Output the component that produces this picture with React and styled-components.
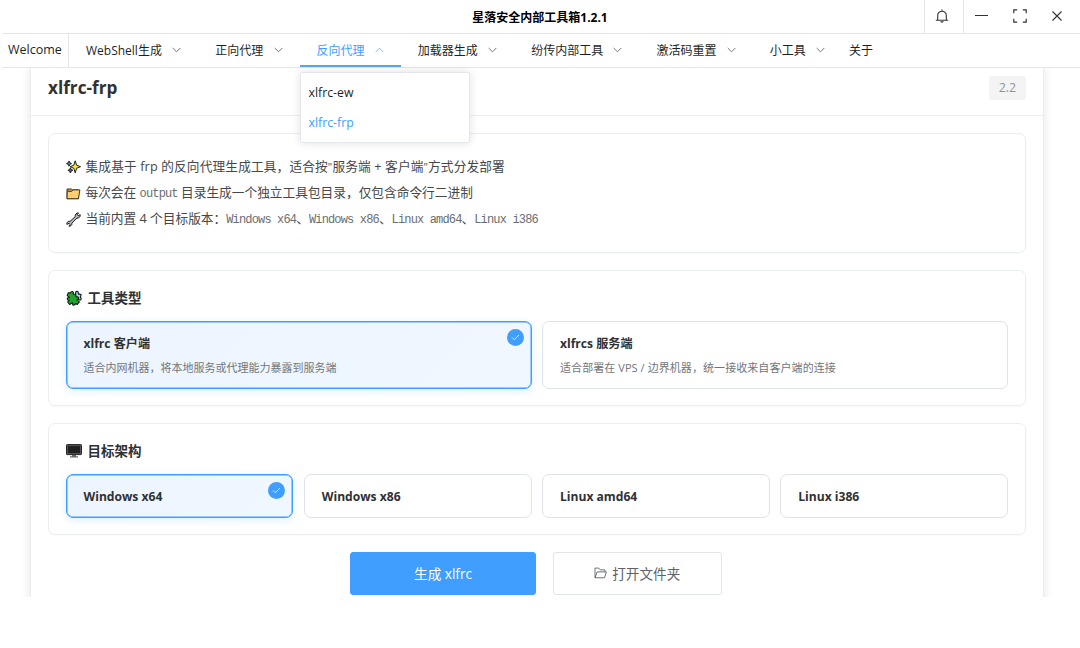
import React from "react";
import styled, { createGlobalStyle, css } from "styled-components";

const GlobalStyle = createGlobalStyle`
  * {
    box-sizing: border-box;
  }
  body {
    margin: 0;
    background: #fff;
    font-family: "Open Sans", "Noto Sans CJK SC", sans-serif;
    font-size: 12px;
    color: #1f1f1f;
  }
`;

const menus = [
  { label: "WebShell生成" },
  { label: "正向代理" },
  { label: "反向代理", open: true },
  { label: "加载器生成" },
  { label: "纷传内部工具" },
  { label: "激活码重置" },
  { label: "小工具" },
];

const types = [
  { name: "xlfrc 客户端", desc: "适合内网机器，将本地服务或代理能力暴露到服务端", active: true },
  { name: "xlfrcs 服务端", desc: "适合部署在 VPS / 边界机器，统一接收来自客户端的连接", spacing: 0.07 },
];

const archs = [
  { name: "Windows x64", active: true },
  { name: "Windows x86" },
  { name: "Linux amd64" },
  { name: "Linux i386" },
];

function Chevron({ up }) {
  return (
    <svg width="9" height="6" viewBox="0 0 9 6" fill="none" stroke={up ? "#6db3fb" : "#666"} strokeWidth="0.9">
      <path d={up ? "M.7 5 4.5 1.2 8.3 5" : "M.7 1 4.5 4.8 8.3 1"} />
    </svg>
  );
}

function BellIcon() {
  return (
    <svg width="14" height="14" viewBox="0 0 14 14" fill="none" stroke="#333" strokeWidth="1.1">
      <path d="M2.7 11.2V6.5a4.3 4.3 0 0 1 8.6 0v4.7M.8 11.3h12.4M7 2.2V.6M5.7 12.1a1.35 1.35 0 0 0 2.6 0" />
    </svg>
  );
}

function ExpandIcon() {
  return (
    <svg width="14" height="14" viewBox="0 0 14 14" fill="none" stroke="#333" strokeWidth="1.2">
      <path d="M.8 4.2V.8h3.4M9.8.8h3.4v3.4M13.2 9.8v3.4H9.8M4.2 13.2H.8V9.8" />
    </svg>
  );
}

function CloseIcon() {
  return (
    <svg width="10" height="10" viewBox="0 0 10 10" stroke="#333" strokeWidth="1.1">
      <path d="m.5.5 9 9m0-9-9 9" />
    </svg>
  );
}

function CheckIcon() {
  return (
    <svg width="9" height="7" viewBox="0 0 9 7" fill="none" stroke="#e4f1ff" strokeWidth="0.9">
      <path d="m1 3.4 2.3 2.3L8 1" />
    </svg>
  );
}

function SparkleIcon() {
  return (
    <svg width="15" height="14" viewBox="0 0 15 14" stroke="#1d1d1d" strokeWidth="1" strokeLinejoin="round">
      <path d="m3 1 .8 1.8 1.7.8-1.7.8L3 6.2l-.8-1.8-1.7-.8 1.7-.8z" fill="#2696cf" />
      <path d="m4.4 7.8.8 1.7 1.7.8-1.7.8-.8 1.9-.8-1.9-1.7-.8 1.7-.8z" fill="#62558b" />
      <path d="m9.2.8 1.4 4.4 3.9 1.5-3.9 1.6-1.4 4.5-1.4-4.5-3.6-1.6 3.6-1.5z" fill="#ffe02b" />
    </svg>
  );
}

function FolderEmoji() {
  return (
    <svg width="15" height="13" viewBox="0 0 15 13" stroke="#33291b" strokeWidth="0.9" strokeLinejoin="round">
      <path d="M1 11.7V2h4.4l1.2.9h6v8.8z" fill="#d9973a" />
      <path d="m1 11.7.3-7.4h4.5l1.3-1.4h6.8l-1.5 8.8z" fill="#ffcf72" />
    </svg>
  );
}

function WrenchIcon() {
  return (
    <svg width="15" height="15" viewBox="0 0 15 15" stroke="#1f1f1f" strokeLinejoin="round">
      <path
        d="M9.2 4.7C8.8 2.6 10.4.7 12.5.9l-1.2 1.9.9 1 2-1.1c.4 2.1-1.3 3.7-3.2 3.4l-5.1 5c.3 2-1.3 3.4-3 3.1l1.2-1.8-1-1.1-2.2 1.1c-.3-2.1 1.3-3.6 3.2-3.1z"
        fill="#b4b5bc"
        strokeWidth="1"
      />
    </svg>
  );
}

function PuzzleIcon() {
  return (
    <svg width="16" height="16" viewBox="0 0 16 16" stroke="#101a12" strokeWidth="1.1" strokeLinejoin="round">
      <path d="M9.6 3.8C9.1.9 12 .6 12.3 2.6l-.1 1.3 2.9.7-.7 3c1.3.6.9 2.5-.6 2.3L9 8z" fill="#a9dce5" />
      <path
        d="M4.6 2.9C5.2.9 7.7 1.2 7.4 3.1l-.3.9 2.7.7.4 2.3c1.8-.9 3.1.6 2.2 1.9-.4.6-1 .7-1.5.8l2.5 2.1-2.1 2.6-2-.8c-.1 1.8-2.4 2-2.8.4l-.1-1.2-2.8 1.6L1.7 12l1.5-1.8c-2 .2-2.6-1.6-1.3-2.5l1.6-.3L1.2 5.6l1.1-2.8z"
        fill="#20a52c"
      />
    </svg>
  );
}

function MonitorIcon() {
  return (
    <svg width="16" height="14" viewBox="0 0 16 14">
      <rect x=".5" y=".6" width="15" height="10" rx=".7" fill="#555" stroke="#222" />
      <rect x="2" y="2.1" width="12" height="7" fill="#202020" />
      <path d="M6 11h4v1.2h2v1.3H4v-1.3h2z" fill="#686868" />
    </svg>
  );
}

function FolderOpenIcon() {
  return (
    <svg width="13" height="12" viewBox="0 0 13 12" fill="none" stroke="#606266" strokeWidth="0.9">
      <path d="M1 10.8V1.1h3.8L6.3 2.9h4.6v2M1 10.8l2.1-5.9h9.3l-1.9 5.9z" />
    </svg>
  );
}

function Option({ name, desc, active, spacing }) {
  return (
    <OptionCard $active={active} $tall={Boolean(desc)}>
      <OptionName>{name}</OptionName>
      {desc && <OptionDesc $spacing={spacing}>{desc}</OptionDesc>}
      {active && (
        <Badge>
          <CheckIcon />
        </Badge>
      )}
    </OptionCard>
  );
}

function App() {
  return (
    <Window>
      <GlobalStyle />
      <TitleBar>
        <AppTitle>星落安全内部工具箱1.2.1</AppTitle>
        <Controls>
          <BellCell>
            <BellIcon />
          </BellCell>
          <Control>
            <MinimizeBar />
          </Control>
          <Control>
            <ExpandIcon />
          </Control>
          <Control>
            <CloseIcon />
          </Control>
        </Controls>
      </TitleBar>

      <Nav>
        <Welcome>Welcome</Welcome>
        {menus.map((m) => (
          <MenuItem key={m.label} $open={m.open}>
            {m.label}
            <Chevron up={m.open} />
            {m.open && (
              <Dropdown>
                <DropdownItem>xlfrc-ew</DropdownItem>
                <DropdownItem $current>xlfrc-frp</DropdownItem>
              </Dropdown>
            )}
          </MenuItem>
        ))}
        <About>关于</About>
      </Nav>

      <Viewport>
        <Panel>
          <PanelHeader>
            <PanelTitle>xlfrc-frp</PanelTitle>
            <Version>2.2</Version>
          </PanelHeader>
          <PanelBody>
            <Card $height={120}>
              <InfoList>
                <InfoRow>
                  <SparkleIcon />
                  <InfoText $spacing={0.13}>
                    集成基于 frp 的反向代理生成工具，适合按<Quote>"</Quote>服务端 + 客户端<Quote>"</Quote>方式分发部署
                  </InfoText>
                </InfoRow>
                <InfoRow>
                  <FolderEmoji />
                  <InfoText>
                    每次会在 <Code>output</Code> 目录生成一个独立工具包目录，仅包含命令行二进制
                  </InfoText>
                </InfoRow>
                <InfoRow>
                  <WrenchIcon />
                  <InfoText>
                    当前内置 4 个目标版本：<Code>Windows x64</Code>、<Code>Windows x86</Code>、<Code>Linux amd64</Code>、
                    <Code>Linux i386</Code>
                  </InfoText>
                </InfoRow>
              </InfoList>
            </Card>

            <Card $height={136}>
              <SectionTitle>
                <PuzzleIcon />
                <span>工具类型</span>
              </SectionTitle>
              <Options $columns={2}>
                {types.map((t) => (
                  <Option key={t.name} {...t} />
                ))}
              </Options>
            </Card>

            <Card $height={112}>
              <SectionTitle>
                <MonitorIcon />
                <span>目标架构</span>
              </SectionTitle>
              <Options $columns={4}>
                {archs.map((a) => (
                  <Option key={a.name} {...a} />
                ))}
              </Options>
            </Card>

            <Actions>
              <Button $primary>生成 xlfrc</Button>
              <Button>
                <FolderOpenIcon />
                打开文件夹
              </Button>
            </Actions>
          </PanelBody>
        </Panel>
      </Viewport>
    </Window>
  );
}

const Window = styled.div`
  width: 1080px;
  height: 648px;
  padding-left: 2px;
  overflow: hidden;
  background: #fff;
`;

const TitleBar = styled.header`
  display: grid;
  grid-template-columns: 1fr auto 1fr;
  align-items: center;
  height: 34px;
  padding-right: 2px;
  border-bottom: 1px solid #e6e6e6;
`;

const AppTitle = styled.div`
  grid-column: 2;
  font-weight: 700;
  color: #000;
`;

const Controls = styled.div`
  display: flex;
  justify-content: flex-end;
  height: 33px;
  padding-right: 2px;
`;

const Control = styled.div`
  display: flex;
  align-items: center;
  justify-content: center;
  width: 37.2px;
  height: 31px;
`;

const BellCell = styled(Control)`
  width: 40px;
  height: 33px;
  padding: 0 4px 2px 0;
  border-left: 1px solid #e6e6e6;
  border-right: 1px solid #e6e6e6;
`;

const MinimizeBar = styled.div`
  width: 13px;
  height: 1px;
  margin-right: 4px;
  background: #333;
`;

const Nav = styled.nav`
  position: relative;
  z-index: 2;
  display: flex;
  height: 34px;
  background: #fff;
  border-bottom: 1px solid #e6e6e6;
`;

const Welcome = styled.div`
  display: flex;
  align-items: center;
  width: 67px;
  padding: 0 0 2px 6px;
  border-right: 1px solid #e6e6e6;
  font-size: 12.5px;
  white-space: nowrap;
`;

const MenuItem = styled.div`
  position: relative;
  display: flex;
  align-items: center;
  gap: 10.3px;
  padding: 0 17px 2px;
  white-space: nowrap;
  ${(p) =>
    p.$open &&
    css`
      color: #409eff;
      box-shadow: inset 0 -2px 0 #5aa5ef;
    `}
`;

const About = styled.div`
  display: flex;
  align-items: center;
  padding: 0 7px 2px;
`;

const Dropdown = styled.div`
  position: absolute;
  top: 38px;
  left: 0;
  width: 170px;
  height: 71px;
  padding: 5px 0;
  background: #fff;
  border: 1px solid #e4e7ed;
  border-radius: 2px;
  box-shadow: 0 0 10px rgba(0, 0, 0, 0.12);
`;

const DropdownItem = styled.div`
  height: 30px;
  padding-left: 8px;
  line-height: 29px;
  font-size: 12.3px;
  color: ${(p) => (p.$current ? "#409eff" : "#1f1f1f")};
`;

const Viewport = styled.main`
  height: 529px;
  padding: 0 35px 0 28px;
  overflow: hidden;
`;

const Panel = styled.section`
  width: 1014px;
  height: 560px;
  border: 1px solid #ebeef0;
  border-top: 0;
  box-shadow: 0 0 10px rgba(0, 0, 0, 0.1);
`;

const PanelHeader = styled.div`
  display: flex;
  align-items: center;
  justify-content: space-between;
  height: 48px;
  padding: 0 17px 7px;
  border-bottom: 1px solid #ebeef0;
`;

const PanelTitle = styled.h1`
  margin: 0;
  padding-bottom: 2px;
  font-size: 17.2px;
  font-weight: 700;
  color: #303133;
`;

const Version = styled.span`
  display: flex;
  align-items: center;
  justify-content: center;
  width: 37px;
  height: 24px;
  padding-bottom: 1px;
  border-radius: 3px;
  background: #f4f4f5;
  color: #909399;
  font-size: 12.4px;
`;

const PanelBody = styled.div`
  display: flex;
  flex-direction: column;
  gap: 17px;
  padding: 17px;
`;

const Card = styled.div`
  flex: none;
  height: ${(p) => p.$height}px;
  padding: 17px 17px 17px 16.5px;
  border: 1px solid #ebeef0;
  border-radius: 7px;
  box-shadow: 0 1px 2px rgba(0, 0, 0, 0.03);
`;

const InfoList = styled.div`
  display: flex;
  flex-direction: column;
  padding-top: 3px;
`;

const InfoRow = styled.div`
  display: flex;
  align-items: center;
  gap: 5px;
  height: 26px;
  color: #454749;
`;

const InfoText = styled.span`
  padding-bottom: 3px;
  font-size: 12.7px;
  letter-spacing: ${(p) => p.$spacing || 0}px;
  white-space: nowrap;
`;

const Quote = styled.span`
  font-size: 11px;
`;

const Code = styled.code`
  font-family: "Liberation Mono", monospace;
  font-size: 12px;
  letter-spacing: -0.84px;
  color: #6b6d70;
`;

const SectionTitle = styled.h2`
  display: flex;
  align-items: center;
  gap: 6px;
  height: 20px;
  margin: 0 0 13px;
  font-size: 13.5px;
  font-weight: 700;
  color: #303133;

  span {
    padding-bottom: 2px;
  }
`;

const Options = styled.div`
  display: grid;
  grid-template-columns: repeat(${(p) => p.$columns}, 1fr);
  gap: 10.5px;
`;

const OptionCard = styled.div`
  position: relative;
  display: flex;
  flex-direction: column;
  justify-content: center;
  gap: 6px;
  height: ${(p) => (p.$tall ? 68 : 44)}px;
  padding: 2px 17px 0;
  border: 1px solid #dfe2e8;
  border-radius: 7px;
  ${(p) =>
    p.$active &&
    css`
      border-color: #409eff;
      background: linear-gradient(135deg, #ecf5ff, #f0f7ff);
      box-shadow: 0 2px 8px rgba(64, 158, 255, 0.18), inset 0 0 0 0.5px #409eff;
    `}
`;

const OptionName = styled.div`
  line-height: 18px;
  font-size: 12.1px;
  font-weight: 700;
  color: #303133;
`;

const OptionDesc = styled.div`
  line-height: 18px;
  font-size: 11px;
  letter-spacing: ${(p) => p.$spacing || 0}px;
  color: #73767a;
  white-space: nowrap;
`;

const Badge = styled.span`
  position: absolute;
  top: 7px;
  right: 7px;
  display: flex;
  align-items: center;
  justify-content: center;
  width: 17px;
  height: 17px;
  border-radius: 50%;
  background: #409eff;
`;

const Actions = styled.div`
  display: flex;
  justify-content: center;
  gap: 17px;
  padding-right: 2px;
`;

const Button = styled.button`
  display: flex;
  align-items: center;
  justify-content: center;
  gap: 5px;
  width: ${(p) => (p.$primary ? 185.5 : 169)}px;
  height: 43px;
  padding: 0 0 2px;
  border: 1px solid ${(p) => (p.$primary ? "#409eff" : "#e1e4e9")};
  border-radius: 3px;
  background: ${(p) => (p.$primary ? "#409eff" : "#fff")};
  color: ${(p) => (p.$primary ? "#fff" : "#606266")};
  font-family: inherit;
  font-size: 13.6px;
`;

export default App;
